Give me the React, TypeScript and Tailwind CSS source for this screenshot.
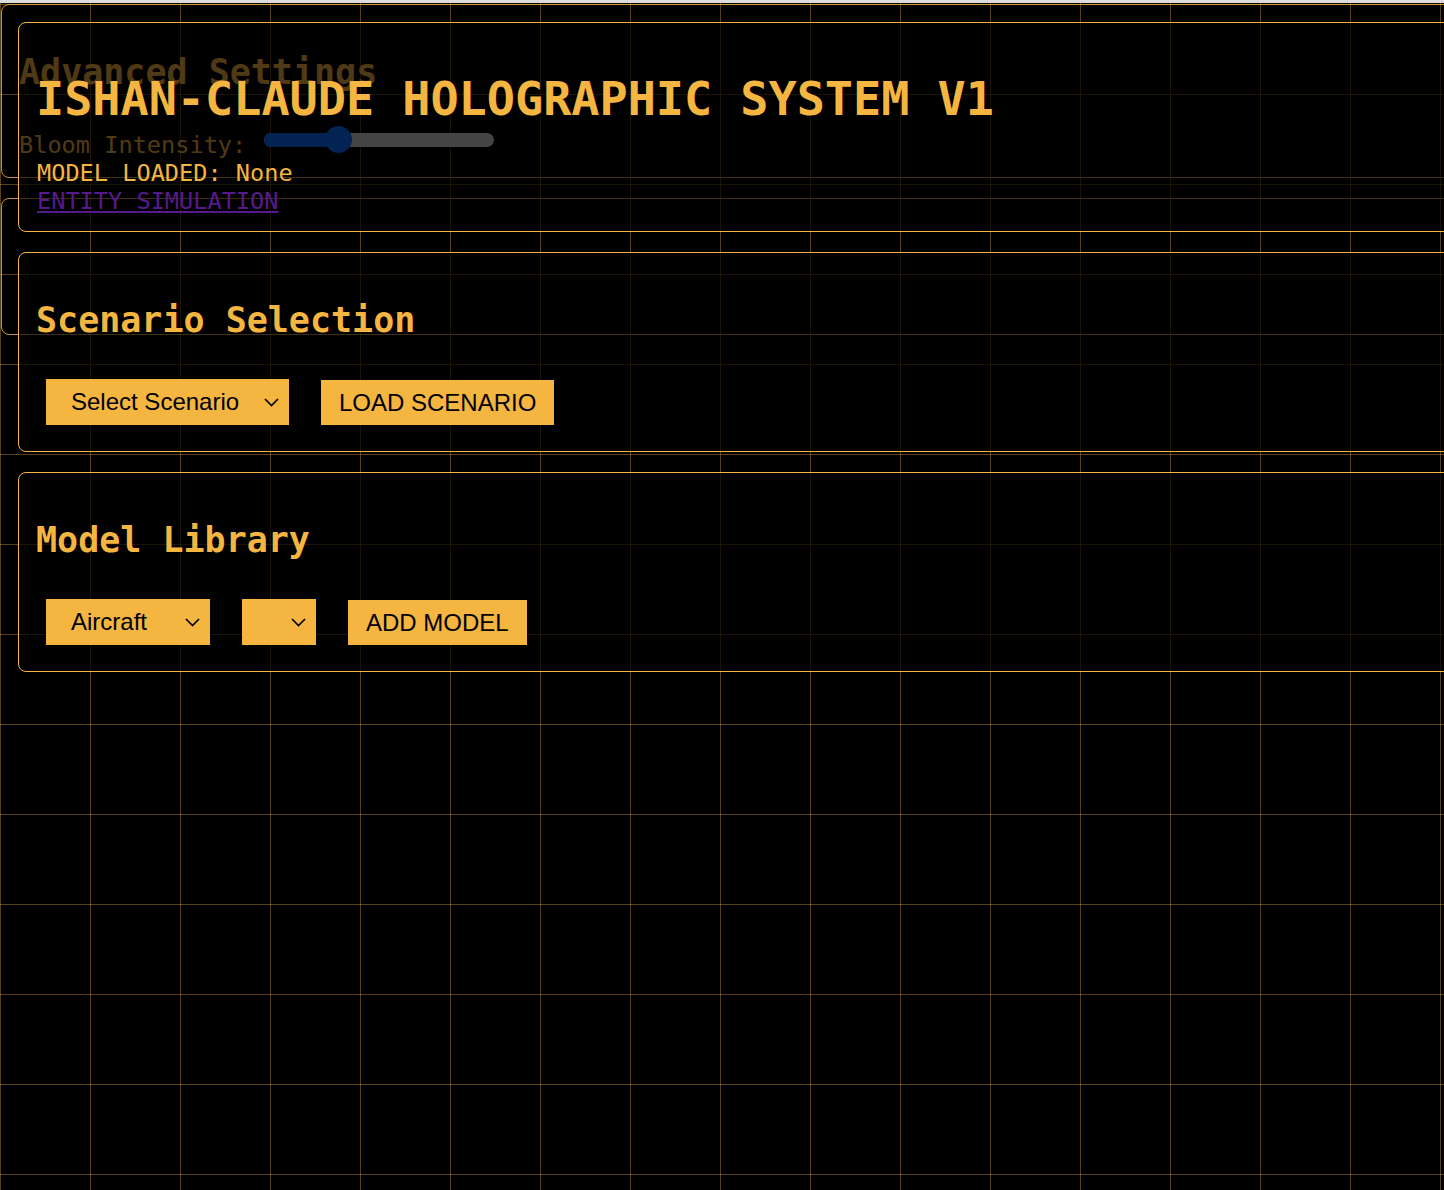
import { ReactNode } from "react";

const Chevron = () => (
    <svg width="15" height="9" viewBox="0 0 15 9" fill="none" className="shrink-0">
        <polyline points="1,1 7.5,7.5 14,1" stroke="#000" strokeWidth="1.7" />
    </svg>
);

const Select = ({ label, width }: { label?: string; width: string }) => (
    <div className={`flex h-[46px] items-center justify-between bg-[#f4b541] pl-[25px] pr-[10px] text-black ${width}`}>
        <span>{label}</span>
        <Chevron />
    </div>
);

const Button = ({ children }: { children: ReactNode }) => (
    <button className="flex h-[45px] items-center bg-[#f4b541] px-[18px] text-black">{children}</button>
);

const Panel = ({ children }: { children: ReactNode }) => (
    <section className="rounded-[8px] border border-[#f4b541] bg-[rgba(0,0,0,0.68)] p-4">{children}</section>
);

const App = () => {
    return (
        <div className="relative min-h-[1190px] overflow-hidden bg-black bg-[linear-gradient(to_right,rgba(244,181,65,0.36)_1.5px,transparent_1.5px),linear-gradient(to_bottom,rgba(244,181,65,0.36)_1.5px,transparent_1.5px)] [background-position:0px_4px] [background-size:90px_90px] font-['DejaVu_Sans_Mono',monospace] text-[23.6px] leading-[28px] text-[#f4b541]">
            <div className="relative z-10 h-[3px] bg-[#dcdcdc]" />

            {/* settings panels sitting behind the main column */}
            <div className="absolute left-[1px] top-[4px] flex w-[1480px] flex-col gap-[20px]">
                <section className="h-[174px] rounded-[8px] border border-[rgba(244,181,65,0.8)] px-4 pt-4">
                    <h2 className="mt-[30px] mb-[30px] pl-[1px] text-[35px] font-bold leading-[42px]">Advanced Settings</h2>
                    <div className="pl-[1px]">
                        Bloom Intensity:{" "}
                        <span className="relative ml-[3px] mt-[3px] inline-block h-[27px] w-[230px] align-baseline">
                            <span className="absolute left-0 right-0 top-[7px] h-[14px] rounded-full bg-[#d4d4d4]" />
                            <span className="absolute left-0 top-[7px] h-[14px] w-[80px] rounded-full bg-[#0a6cff]" />
                            <span className="absolute left-[61px] top-0 h-[27px] w-[27px] rounded-full bg-[#0a6cff]" />
                        </span>
                    </div>
                </section>
                <section className="h-[137px] rounded-[8px] border border-[rgba(244,181,65,0.8)]" />
            </div>

            <main className="relative ml-[18px] mt-[19px] flex w-[1460px] flex-col gap-[20px]">
                <Panel>
                    <h1 className="my-[32px] pl-[1px] text-[46.8px] font-bold leading-[56px]">ISHAN-CLAUDE HOLOGRAPHIC SYSTEM V1</h1>
                    <div className="pl-[2px]">MODEL LOADED: None</div>
                    <a href="#" className="ml-[2px] block w-fit text-[#551a8b] underline">ENTITY SIMULATION</a>
                </Panel>

                <Panel>
                    <h2 className="my-[30px] pl-[1px] text-[35px] font-bold leading-[42px]">Scenario Selection</h2>
                    <div className="ml-[11px] flex items-end gap-[32px] pt-[8px] pb-[10px] font-['Liberation_Sans',Arial,sans-serif] text-[24px]">
                        <Select label="Select Scenario" width="w-[243px]" />
                        <Button>LOAD SCENARIO</Button>
                    </div>
                </Panel>

                <Panel>
                    <h2 className="my-[30px] pl-[1px] text-[35px] font-bold leading-[42px]">Model Library</h2>
                    <div className="ml-[11px] flex items-end gap-[32px] pt-[8px] pb-[10px] font-['Liberation_Sans',Arial,sans-serif] text-[24px]">
                        <Select label="Aircraft" width="w-[164px]" />
                        <Select width="w-[74px]" />
                        <Button>ADD MODEL</Button>
                    </div>
                </Panel>
            </main>
        </div>
    );
};

export default App;
